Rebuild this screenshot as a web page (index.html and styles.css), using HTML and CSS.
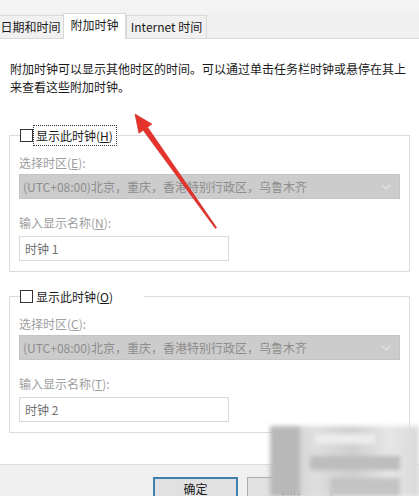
FILE: index.html
```html
<!DOCTYPE html>
<html lang="zh-CN">
<head>
<meta charset="utf-8">
<title>附加时钟</title>
<link rel="stylesheet" href="styles.css">
</head>
<body>
<div class="dialog">
  <div class="topband"></div>
  <div class="tabs">
    <div class="tab tab-date">日期和时间</div>
    <div class="tab tab-active">附加时钟</div>
    <div class="tab tab-inet">Internet 时间</div>
  </div>
  <div class="page">
    <p class="intro">附加时钟可以显示其他时区的时间。可以通过单击任务栏时钟或悬停在其上来查看这些附加时钟。</p>

    <div class="group">
      <div class="legend">
        <span class="check"></span>
        <span class="legend-label focus">显示此时钟(<u>H</u>)</span>
      </div>
      <div class="label">选择时区(<u>E</u>):</div>
      <div class="select">
        <span class="select-text">(UTC+08:00)北京，重庆，香港特别行政区，乌鲁木齐</span>
        <svg class="chev" width="10" height="6" viewBox="0 0 10 6"><path d="M1 1 L5 5 L9 1" fill="none" stroke="#e2e2e2" stroke-width="1.2"/></svg>
      </div>
      <div class="label label-gap">输入显示名称(<u>N</u>):</div>
      <div class="input">时钟 1</div>
    </div>

    <div class="group group2">
      <div class="legend legend-wide">
        <span class="check"></span>
        <span class="legend-label">显示此时钟(<u>O</u>)</span>
      </div>
      <div class="label">选择时区(<u>C</u>):</div>
      <div class="select">
        <span class="select-text">(UTC+08:00)北京，重庆，香港特别行政区，乌鲁木齐</span>
        <svg class="chev" width="10" height="6" viewBox="0 0 10 6"><path d="M1 1 L5 5 L9 1" fill="none" stroke="#e2e2e2" stroke-width="1.2"/></svg>
      </div>
      <div class="label label-gap">输入显示名称(<u>T</u>):</div>
      <div class="input">时钟 2</div>
    </div>
  </div>
  <div class="footer">
    <div class="btn btn-default">确定</div>
    <div class="btn">取消</div>
  </div>

  <svg class="arrow" width="419" height="496" viewBox="0 0 419 496">
    <polygon points="135,114 151.9,124.1 147.6,127.2 216.6,227.6 215.4,228.4 143.2,130.3 138.9,133.3" fill="#e5332c" stroke="#c92a24" stroke-width="0.6" stroke-linejoin="round"/>
  </svg>
  <div class="watermark">
    <span class="wm wm1"></span>
    <span class="wm wm2"></span>
    <span class="wm wm3"></span>
    <span class="wm wm4"></span>
  </div>
</div>
</body>
</html>
```

FILE: styles.css
```css
html, body {
  margin: 0;
  padding: 0;
}
body {
  background: #f0f0f0;
  font-family: "Noto Sans CJK SC", "Noto Sans", sans-serif;
  font-size: 12px;
  color: #1a1a1a;
}
.dialog {
  position: relative;
  width: 419px;
  height: 496px;
  overflow: hidden;
  background: #f0f0f0;
}
.topband {
  height: 13px;
  background: #f3f3f3;
}
.tabs {
  display: flex;
  align-items: flex-end;
  height: 25px;
}
.tab {
  box-sizing: border-box;
  height: 23px;
  line-height: 21px;
  text-align: center;
  background: #f0f0f0;
  border: 1px solid #d9d9d9;
  border-bottom: none;
  white-space: nowrap;
  color: #1a1a1a;
}
.tab-date {
  width: 67px;
  margin-left: -3px;
  padding-left: 0;
}
.tab-active {
  position: relative;
  z-index: 1;
  width: 63px;
  height: 26px;
  margin-bottom: -1px;
  line-height: 22px;
  background: #ffffff;
  margin-left: -1px;
}
.tab-inet {
  width: 81px;
}
.page {
  box-sizing: border-box;
  height: 427px;
  background: #ffffff;
  border-top: 1px solid #d9d9d9;
  border-bottom: 1px solid #dcdcdc;
  padding: 21px 10px 0 10px;
}
.intro {
  margin: 0;
  line-height: 18px;
  color: #1a1a1a;
}
.group {
  margin: 39px -1px 0 -1px;
  border: 1px solid #dcdcdc;
  padding: 0 9px 10px 9px;
}
.group2 {
  margin-top: 24px;
}
.legend {
  display: flex;
  align-items: center;
  width: fit-content;
  height: 21px;
  margin-top: -11px;
  margin-left: 1px;
  background: #ffffff;
  padding-right: 1px;
}
.legend-wide {
  padding-right: 27px;
}
.check {
  box-sizing: border-box;
  width: 13px;
  height: 13px;
  border: 1px solid #333333;
  background: #ffffff;
}
.legend-label {
  box-sizing: border-box;
  height: 21px;
  line-height: 19px;
  padding: 0 3px 0 2px;
  border: 1px solid transparent;
  color: #1a1a1a;
}
.focus {
  border: 1px dotted #333333;
}
.label {
  margin-top: 8px;
  line-height: 18px;
  color: #9e9e9e;
}
.label-gap {
  margin-top: 15px;
}
.select {
  box-sizing: border-box;
  display: flex;
  align-items: center;
  justify-content: space-between;
  height: 25px;
  margin-top: 2px;
  padding: 0 8px 0 3px;
  background: #cccccc;
  border: 1px solid #c4c4c4;
  color: #8c8c8c;
}
.select-text {
  white-space: nowrap;
}
.chev {
  display: block;
}
.input {
  box-sizing: border-box;
  width: 210px;
  height: 25px;
  margin-top: 4px;
  padding: 0 5px;
  line-height: 23px;
  border: 1px solid #d9d9d9;
  background: #ffffff;
  color: #707070;
}
.footer {
  display: flex;
  gap: 9px;
  padding: 12px 0 0 153px;
}
.btn {
  box-sizing: border-box;
  width: 85px;
  height: 24px;
  line-height: 21px;
  text-align: center;
  background: #e1e1e1;
  border: 1px solid #adadad;
  color: #1a1a1a;
}
.btn-default {
  border: 2px solid #3f7fae;
  line-height: 20px;
}
.arrow {
  position: absolute;
  left: 0;
  top: 0;
  pointer-events: none;
}
.watermark {
  position: absolute;
  left: 270px;
  top: 426px;
  width: 149px;
  height: 70px;
  background: linear-gradient(90deg, #c8c8c8 0%, #dedede 30%, #cfcfcf 55%, #e6e6e6 80%, #d9d9d9 100%);
  filter: blur(2px);
}
.wm {
  position: absolute;
  display: block;
}
.wm1 { left: 0; top: 0; width: 30px; height: 70px; background: #b8b8b8; }
.wm2 { left: 45px; top: 8px; width: 60px; height: 10px; background: #ececec; }
.wm3 { left: 40px; top: 30px; width: 90px; height: 14px; background: #bdbdbd; }
.wm4 { left: 60px; top: 52px; width: 70px; height: 18px; background: #c4c4c4; }
```
